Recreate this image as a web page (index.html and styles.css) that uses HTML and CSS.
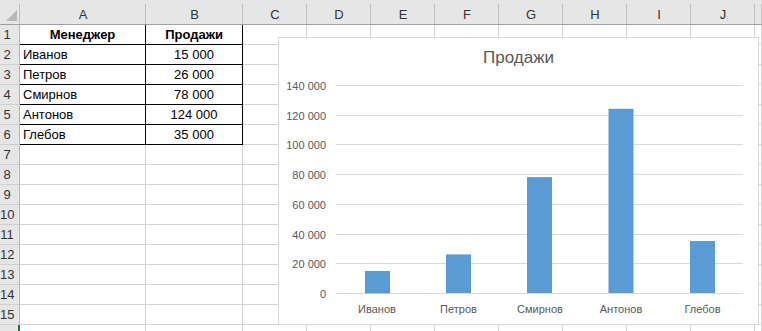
FILE: index.html
```html
<!DOCTYPE html>
<html lang="ru">
<head>
    <meta charset="UTF-8">
    <meta name="viewport" content="width=device-width, initial-scale=1.0">
    <title>Продажи</title>
    <link rel="stylesheet" href="styles.css">
</head>
<body>
    <div class="workbook">
        <!-- сетка листа -->
        <div class="sheet">
            <div class="corner"><span class="corner-tri"></span></div>
            <div class="ch">A</div><div class="ch">B</div><div class="ch">C</div><div class="ch">D</div><div class="ch">E</div><div class="ch">F</div><div class="ch">G</div><div class="ch">H</div><div class="ch">I</div><div class="ch">J</div><div class="ch"></div>

            <div class="rh">1</div><div class="c b head">Менеджер</div><div class="c b head center">Продажи</div><div class="c"></div><div class="c"></div><div class="c"></div><div class="c"></div><div class="c"></div><div class="c"></div><div class="c"></div><div class="c"></div><div class="c"></div>
            <div class="rh">2</div><div class="c b">Иванов</div><div class="c b center">15 000</div><div class="c"></div><div class="c"></div><div class="c"></div><div class="c"></div><div class="c"></div><div class="c"></div><div class="c"></div><div class="c"></div><div class="c"></div>
            <div class="rh">3</div><div class="c b">Петров</div><div class="c b center">26 000</div><div class="c"></div><div class="c"></div><div class="c"></div><div class="c"></div><div class="c"></div><div class="c"></div><div class="c"></div><div class="c"></div><div class="c"></div>
            <div class="rh">4</div><div class="c b">Смирнов</div><div class="c b center">78 000</div><div class="c"></div><div class="c"></div><div class="c"></div><div class="c"></div><div class="c"></div><div class="c"></div><div class="c"></div><div class="c"></div><div class="c"></div>
            <div class="rh">5</div><div class="c b">Антонов</div><div class="c b center">124 000</div><div class="c"></div><div class="c"></div><div class="c"></div><div class="c"></div><div class="c"></div><div class="c"></div><div class="c"></div><div class="c"></div><div class="c"></div>
            <div class="rh">6</div><div class="c b">Глебов</div><div class="c b center">35 000</div><div class="c"></div><div class="c"></div><div class="c"></div><div class="c"></div><div class="c"></div><div class="c"></div><div class="c"></div><div class="c"></div><div class="c"></div>
            <div class="rh">7</div><div class="c"></div><div class="c"></div><div class="c"></div><div class="c"></div><div class="c"></div><div class="c"></div><div class="c"></div><div class="c"></div><div class="c"></div><div class="c"></div><div class="c"></div>
            <div class="rh">8</div><div class="c"></div><div class="c"></div><div class="c"></div><div class="c"></div><div class="c"></div><div class="c"></div><div class="c"></div><div class="c"></div><div class="c"></div><div class="c"></div><div class="c"></div>
            <div class="rh">9</div><div class="c"></div><div class="c"></div><div class="c"></div><div class="c"></div><div class="c"></div><div class="c"></div><div class="c"></div><div class="c"></div><div class="c"></div><div class="c"></div><div class="c"></div>
            <div class="rh">10</div><div class="c"></div><div class="c"></div><div class="c"></div><div class="c"></div><div class="c"></div><div class="c"></div><div class="c"></div><div class="c"></div><div class="c"></div><div class="c"></div><div class="c"></div>
            <div class="rh">11</div><div class="c"></div><div class="c"></div><div class="c"></div><div class="c"></div><div class="c"></div><div class="c"></div><div class="c"></div><div class="c"></div><div class="c"></div><div class="c"></div><div class="c"></div>
            <div class="rh">12</div><div class="c"></div><div class="c"></div><div class="c"></div><div class="c"></div><div class="c"></div><div class="c"></div><div class="c"></div><div class="c"></div><div class="c"></div><div class="c"></div><div class="c"></div>
            <div class="rh">13</div><div class="c"></div><div class="c"></div><div class="c"></div><div class="c"></div><div class="c"></div><div class="c"></div><div class="c"></div><div class="c"></div><div class="c"></div><div class="c"></div><div class="c"></div>
            <div class="rh">14</div><div class="c"></div><div class="c"></div><div class="c"></div><div class="c"></div><div class="c"></div><div class="c"></div><div class="c"></div><div class="c"></div><div class="c"></div><div class="c"></div><div class="c"></div>
            <div class="rh">15</div><div class="c"></div><div class="c"></div><div class="c"></div><div class="c"></div><div class="c"></div><div class="c"></div><div class="c"></div><div class="c"></div><div class="c"></div><div class="c"></div><div class="c"></div>
            <div class="rh active"></div><div class="c"></div><div class="c"></div><div class="c"></div><div class="c"></div><div class="c"></div><div class="c"></div><div class="c"></div><div class="c"></div><div class="c"></div><div class="c"></div><div class="c"></div>
        </div>

        <!-- диаграмма поверх ячеек -->
        <div class="chart">
            <svg class="chart-svg" width="479" height="286" viewBox="0 0 479 286">
                <text class="chart-title" x="239.5" y="25" text-anchor="middle">Продажи</text>

                <g class="grid">
                    <line x1="57" y1="47.5" x2="464" y2="47.5"/>
                    <line x1="57" y1="77.5" x2="464" y2="77.5"/>
                    <line x1="57" y1="106.5" x2="464" y2="106.5"/>
                    <line x1="57" y1="136.5" x2="464" y2="136.5"/>
                    <line x1="57" y1="166.5" x2="464" y2="166.5"/>
                    <line x1="57" y1="196.5" x2="464" y2="196.5"/>
                    <line x1="57" y1="225.5" x2="464" y2="225.5"/>
                    <line x1="57" y1="255.5" x2="464" y2="255.5"/>
                </g>

                <g class="axis-y" text-anchor="end">
                    <text x="47" y="51.5">140 000</text>
                    <text x="47" y="81.5">120 000</text>
                    <text x="47" y="110.5">100 000</text>
                    <text x="47" y="140.5">80 000</text>
                    <text x="47" y="170.5">60 000</text>
                    <text x="47" y="200.5">40 000</text>
                    <text x="47" y="229.5">20 000</text>
                    <text x="47" y="259.5">0</text>
                </g>

                <g class="bars">
                    <rect x="86" y="233" width="25" height="22.3"/>
                    <rect x="167" y="216.4" width="25" height="38.6"/>
                    <rect x="248" y="139.1" width="25" height="115.9"/>
                    <rect x="329.5" y="70.8" width="25" height="184.2"/>
                    <rect x="411" y="203" width="25" height="52"/>
                </g>

                <g class="axis-x" text-anchor="middle">
                    <text x="98" y="275">Иванов</text>
                    <text x="179.5" y="275">Петров</text>
                    <text x="261" y="275">Смирнов</text>
                    <text x="342" y="275">Антонов</text>
                    <text x="423.5" y="275">Глебов</text>
                </g>
            </svg>
        </div>
    </div>
</body>
</html>
```

FILE: styles.css
```css
* {
    margin: 0;
    padding: 0;
    box-sizing: border-box;
}

body {
    background-color: #fff;
    color: #000;
    font-family: "Liberation Sans", Arial, sans-serif;
    font-size: 13px;
    overflow: hidden;
}

.workbook {
    position: relative;
    width: 762px;
    height: 331px;
    overflow: hidden;
}

/* лист */
.sheet {
    display: grid;
    grid-template-columns: 20px 126px 97px repeat(8, 64px) 1fr;
    grid-template-rows: 25px repeat(16, 20px);
}

.corner,
.ch {
    background: linear-gradient(#bfbfbf, #bfbfbf) right bottom / 1px 20px no-repeat, #e6e6e6;
    border-bottom: 1px solid #a0a0a0;
}

.corner {
    position: relative;
}

.corner-tri {
    position: absolute;
    right: 3px;
    bottom: 3px;
    width: 0;
    height: 0;
    border-left: 11px solid transparent;
    border-bottom: 11px solid #b8b8b8;
}

.ch {
    padding-top: 5px;
    line-height: 19px;
    text-align: center;
    color: #333;
}

.rh {
    background-color: #e6e6e6;
    border-right: 1px solid #b4b4b4;
    border-bottom: 1px solid #d0d0d0;
    padding-right: 5px;
    line-height: 19px;
    text-align: center;
    color: #333;
    white-space: nowrap;
}

.rh.active {
    border-right: 2px solid #217346;
}

.c {
    border-right: 1px solid #d4d4d4;
    border-bottom: 1px solid #d4d4d4;
    padding: 0 3px;
    line-height: 19px;
    white-space: nowrap;
    overflow: hidden;
}

.c.b {
    border-right-color: #000;
    border-bottom-color: #000;
}

.c.head {
    font-weight: bold;
    text-align: center;
}

.c.center {
    text-align: center;
}

/* диаграмма */
.chart {
    position: absolute;
    left: 278px;
    top: 37px;
    width: 481px;
    height: 288px;
    background-color: #fff;
    border: 1px solid #d9d9d9;
}

.chart-svg {
    display: block;
    font-family: "Liberation Sans", Arial, sans-serif;
}

.chart-title {
    font-size: 17px;
    fill: #595959;
}

.grid line {
    stroke: #d9d9d9;
    stroke-width: 1;
}

.axis-y text,
.axis-x text {
    font-size: 11px;
    fill: #595959;
}

.bars rect {
    fill: #5b9bd5;
}
```
